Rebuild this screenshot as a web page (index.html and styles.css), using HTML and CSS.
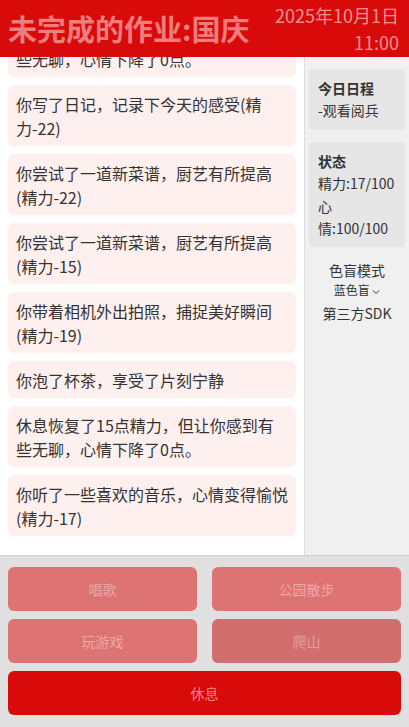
FILE: index.html
```html
<!DOCTYPE html>
<html lang="zh-CN">
<head>
    <meta charset="UTF-8">
    <meta name="viewport" content="width=device-width, initial-scale=1.0">
    <title>未完成的作业:国庆</title>
    <link rel="stylesheet" href="styles.css">
</head>
<body>
    <!-- Header -->
    <header class="top-bar">
        <h1 class="title">未完成的作业:国庆</h1>
        <div class="clock">
            <div>2025年10月1日</div>
            <div>11:00</div>
        </div>
    </header>

    <div class="main">
        <!-- Event Log -->
        <div class="log">
            <div class="log-item">休息恢复了15点精力，但让你感到有些无聊，心情下降了0点。</div>
            <div class="log-item">你写了日记，记录下今天的感受(精力-22)</div>
            <div class="log-item">你尝试了一道新菜谱，厨艺有所提高(精力-22)</div>
            <div class="log-item">你尝试了一道新菜谱，厨艺有所提高(精力-15)</div>
            <div class="log-item">你带着相机外出拍照，捕捉美好瞬间(精力-19)</div>
            <div class="log-item">你泡了杯茶，享受了片刻宁静</div>
            <div class="log-item">休息恢复了15点精力，但让你感到有些无聊，心情下降了0点。</div>
            <div class="log-item">你听了一些喜欢的音乐，心情变得愉悦(精力-17)</div>
        </div>

        <!-- Sidebar -->
        <aside class="sidebar">
            <div class="side-card">
                <div class="side-title">今日日程</div>
                <div>-观看阅兵</div>
            </div>
            <div class="side-card">
                <div class="side-title">状态</div>
                <div>精力:17/100</div>
                <div>心情:100/100</div>
            </div>
            <div class="side-option">
                <div>色盲模式</div>
                <div class="picker">蓝色盲
                    <svg width="8" height="6" viewBox="0 0 8 6"><path d="M1 1.5 L4 4.5 L7 1.5" fill="none" stroke="#333" stroke-width="1"/></svg>
                </div>
            </div>
            <div class="side-option">第三方SDK</div>
        </aside>
    </div>

    <!-- Actions -->
    <div class="actions">
        <button class="action">唱歌</button>
        <button class="action">公园散步</button>
        <button class="action">玩游戏</button>
        <button class="action hover">爬山</button>
        <button class="action rest">休息</button>
    </div>
</body>
</html>
```

FILE: styles.css
```css
html, body {
    margin: 0;
    height: 100%;
}

body {
    font-family: "Noto Sans CJK SC", "Noto Sans", sans-serif;
    display: flex;
    flex-direction: column;
    color: #333;
    background-color: #fff;
}

.top-bar {
    height: 57px;
    flex-shrink: 0;
    background-color: #d90a0a;
    display: flex;
    align-items: center;
    justify-content: space-between;
    padding: 0 10px 0 8px;
}

.title {
    margin: 0;
    font-size: 29px;
    font-weight: bold;
    color: #f07c7c;
    line-height: 1;
}

.clock {
    text-align: right;
    font-size: 18px;
    line-height: 27px;
    color: #ee9090;
}

.main {
    flex: 1;
    display: flex;
    min-height: 0;
}

.log {
    width: 288px;
    padding: 8px 8px 19px;
    display: flex;
    flex-direction: column;
    justify-content: flex-end;
    gap: 8px;
    overflow: hidden;
}

.log-item {
    flex-shrink: 0;
    background-color: #fff0f0;
    border-radius: 6px;
    padding: 6.5px 8px;
    font-size: 16px;
    line-height: 24px;
}

.sidebar {
    flex: 1;
    background-color: #f0f0f0;
    border-left: 1px solid #dedede;
    padding: 12px 4px 0 4px;
    display: flex;
    flex-direction: column;
    gap: 12px;
    font-size: 14px;
    line-height: 22.4px;
}

.side-card {
    background-color: #e6e6e6;
    border-radius: 4px;
    padding: 8px 9px;
}

.side-title {
    font-weight: bold;
}

.side-option {
    text-align: center;
    margin-top: -12px;
    padding-top: 12px;
}

.side-option + .side-option {
    padding-top: 4px;
}

.picker {
    font-size: 12px;
    line-height: 16px;
}

.picker svg {
    vertical-align: middle;
}

.actions {
    flex-shrink: 0;
    background-color: #e0e0e0;
    border-top: 1px solid #cfcfcf;
    padding: 11px 8px 12px;
    display: grid;
    grid-template-columns: 1fr 1fr;
    column-gap: 15px;
    row-gap: 8px;
}

.action {
    height: 44px;
    border: none;
    border-radius: 6px;
    font-family: inherit;
    font-size: 14px;
    background-color: #de7373;
    color: #efa6a6;
    cursor: pointer;
}

.action.hover {
    background-color: #d26e6e;
    color: #e59e9e;
}

.action.rest {
    grid-column: 1 / 3;
    background-color: #d90a0a;
    color: #f08a8a;
}
```
